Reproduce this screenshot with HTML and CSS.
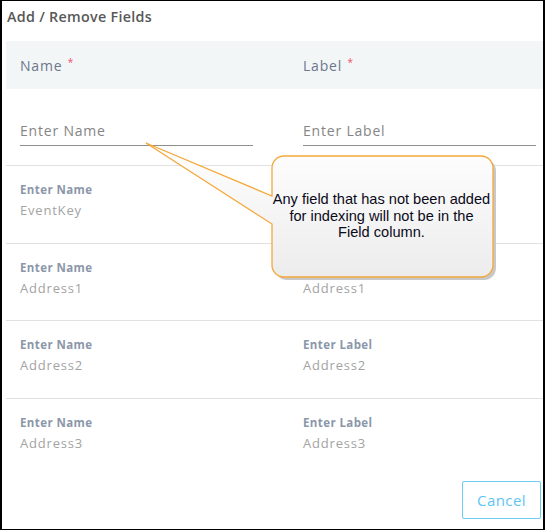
FILE: index.html
```html
<!DOCTYPE html>
<html>
<head>
<meta charset="utf-8">
<link rel="stylesheet" href="styles.css">
</head>
<body>
<div class="frame">
  <div class="title">Add / Remove Fields</div>
  <div class="grid head">
    <div class="hcell">Name <span class="req">*</span></div>
    <div class="hcell">Label <span class="req">*</span></div>
  </div>
  <div class="grid inputs">
    <div class="field">Enter Name</div>
    <div class="field">Enter Label</div>
  </div>
  <div class="grid row">
    <div><div class="lbl">Enter Name</div><div class="val">EventKey</div></div>
    <div></div>
  </div>
  <div class="grid row">
    <div><div class="lbl">Enter Name</div><div class="val">Address1</div></div>
    <div><div class="lbl"></div><div class="val">Address1</div></div>
  </div>
  <div class="grid row">
    <div><div class="lbl">Enter Name</div><div class="val">Address2</div></div>
    <div><div class="lbl">Enter Label</div><div class="val">Address2</div></div>
  </div>
  <div class="grid row last">
    <div><div class="lbl">Enter Name</div><div class="val">Address3</div></div>
    <div><div class="lbl">Enter Label</div><div class="val">Address3</div></div>
  </div>
  <div class="footer">
    <button class="cancel">Cancel</button>
  </div>

  <svg class="callout-shape" width="545" height="530" viewBox="0 0 545 530">
    <defs>
      <linearGradient id="cg" x1="0" y1="0" x2="0" y2="1">
        <stop offset="0" stop-color="#ffffff"/>
        <stop offset="1" stop-color="#ececec"/>
      </linearGradient>
    </defs>
    <rect x="275" y="159" width="221" height="121" rx="12" fill="#c8c8c8"/>
    <path d="M284 156 H481 A12 12 0 0 1 493 168 V265 A12 12 0 0 1 481 277 H284 A12 12 0 0 1 272 265 V224 L146 143 L272 196 V168 A12 12 0 0 1 284 156 Z" fill="url(#cg)" stroke="#f4a83a" stroke-width="1.3" stroke-linejoin="miter"/>
  </svg>
  <div class="callout-text">Any field that has not been added for indexing will not be in the Field column.</div>
</div>
</body>
</html>
```
FILE: styles.css
```css
html, body {
  margin: 0;
  padding: 0;
  background: #fff;
}
body {
  font-family: "Open Sans", "Liberation Sans", sans-serif;
}
.frame {
  position: relative;
  width: 545px;
  height: 530px;
  box-sizing: border-box;
  border-top: 1px solid #000;
  border-bottom: 1px solid #000;
  border-left: 2px solid #000;
  border-right: 2px solid #000;
  padding-left: 4px;
  overflow: hidden;
}
.title {
  height: 40px;
  box-sizing: border-box;
  padding-top: 7px;
  padding-left: 1px;
  font-size: 14.3px;
  line-height: 18px;
  font-weight: 600;
  color: #585858;
  letter-spacing: 0.3px;
}
.grid {
  display: grid;
  grid-template-columns: 233px 233px;
  column-gap: 50px;
  padding-left: 14px;
}
.head {
  height: 48px;
  background: #f3f6f7;
  align-items: center;
}
.hcell {
  font-size: 14px;
  color: #6b778a;
  letter-spacing: 0.8px;
  line-height: 18px;
  margin-top: -3px;
}
.req {
  color: #f0506e;
  font-size: 10px;
  vertical-align: 5px;
  margin-left: 1px;
}
.inputs {
  height: 76px;
  box-sizing: border-box;
  padding-top: 31px;
}
.field {
  height: 26px;
  box-sizing: border-box;
  border-bottom: 1px solid #8e8e8e;
  font-size: 14px;
  line-height: 22px;
  color: #858585;
  letter-spacing: 0.8px;
}
.row {
  height: 77.7px;
  box-sizing: border-box;
  border-top: 1px solid #e1e1e1;
  padding-top: 17px;
}
.lbl {
  height: 14px;
  font-size: 11.5px;
  line-height: 14px;
  font-weight: 700;
  color: #8b97a9;
  letter-spacing: 0.4px;
}
.val {
  margin-top: 5px;
  font-size: 13px;
  line-height: 16px;
  color: #a3a3a3;
  letter-spacing: 0.8px;
}
.footer {
  display: flex;
  justify-content: flex-end;
  padding-top: 5px;
  padding-right: 2px;
}
.cancel {
  width: 79px;
  height: 38px;
  box-sizing: border-box;
  border: 1px solid #6ccdf3;
  border-radius: 2px;
  background: #fff;
  color: #5cc5f3;
  font-family: "Open Sans", "Liberation Sans", sans-serif;
  font-size: 15px;
  letter-spacing: 0.4px;
  padding: 0;
}
.callout-shape {
  position: absolute;
  left: -2px;
  top: -1px;
  pointer-events: none;
}
.callout-text {
  position: absolute;
  left: 270px;
  top: 190px;
  width: 219px;
  text-align: center;
  font-family: "Liberation Sans", Arial, sans-serif;
  font-size: 14.6px;
  line-height: 16.6px;
  color: #0a0a1a;
}
```
